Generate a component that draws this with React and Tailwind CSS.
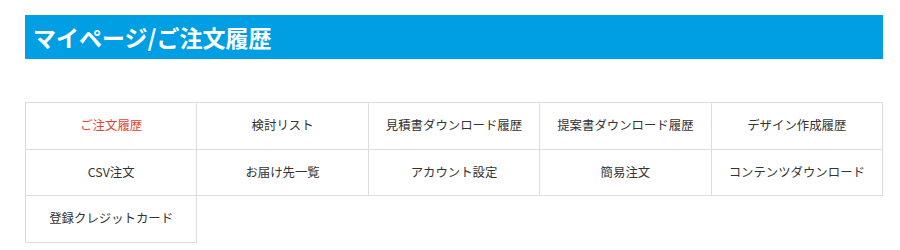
import React from "react";

const links = [
  { label: "ご注文履歴", active: true },
  { label: "検討リスト" },
  { label: "見積書ダウンロード履歴" },
  { label: "提案書ダウンロード履歴" },
  { label: "デザイン作成履歴" },
  { label: "CSV注文" },
  { label: "お届け先一覧" },
  { label: "アカウント設定" },
  { label: "簡易注文" },
  { label: "コンテンツダウンロード" },
  { label: "登録クレジットカード" },
];

const App = () => {
  return (
    <div
      className="min-h-screen bg-white pt-[15px] px-[25px]"
      style={{ fontFamily: '"Noto Sans CJK JP", "Noto Sans", sans-serif' }}
    >
      {/* Page title */}
      <h1 className="bg-[#009fe3] h-[44px] flex items-center pl-[8px] text-white text-[23px] font-bold w-[858px]">
        マイページ/ご注文履歴
      </h1>

      {/* Menu grid */}
      <div className="mt-[43px] w-[858px] grid grid-cols-5 border-t border-l border-[#dddddd]">
        {links.map((link) => (
          <a
            key={link.label}
            href="#"
            className={
              "h-[46.5px] flex items-center justify-center border-r border-b border-[#dddddd] text-[12.4px] " +
              (link.active ? "text-[#e0452f]" : "text-[#333333]")
            }
          >
            {link.label}
          </a>
        ))}
      </div>
    </div>
  );
};

export default App;
